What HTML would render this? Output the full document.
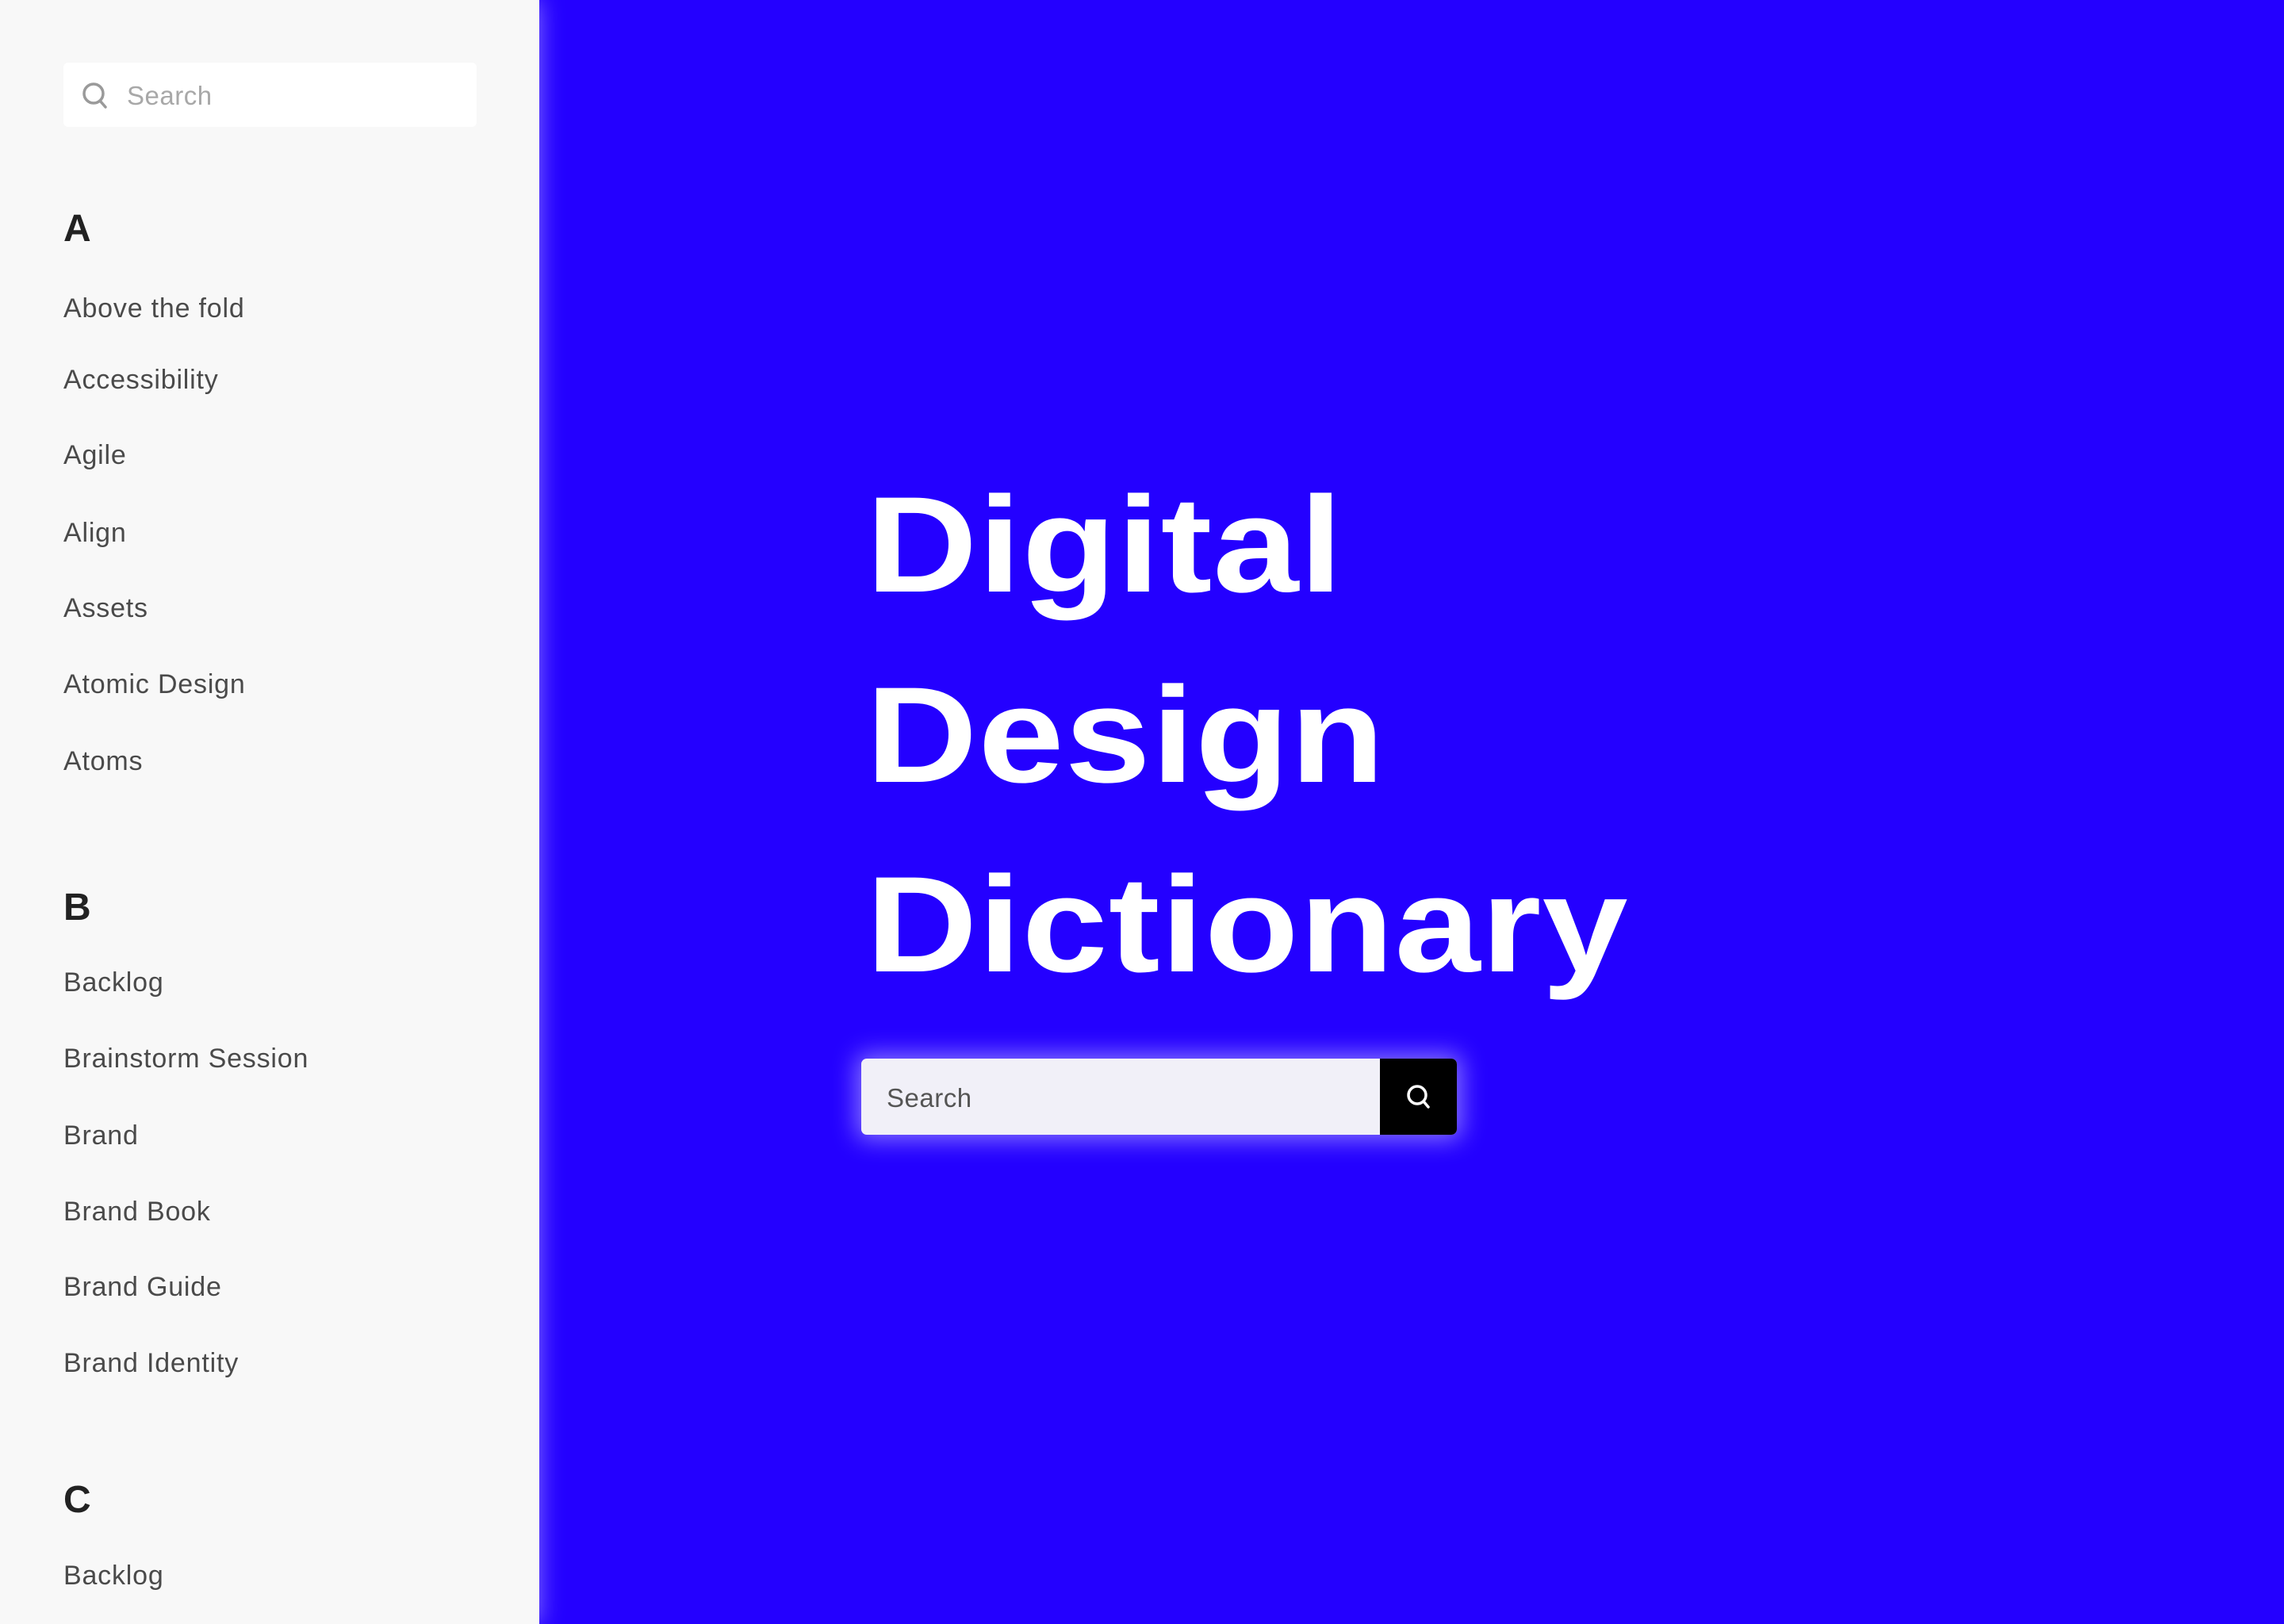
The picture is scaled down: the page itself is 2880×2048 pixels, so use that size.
<!DOCTYPE html>
<html><head><meta charset="utf-8"><style>
*{margin:0;padding:0;box-sizing:border-box}
body{width:2880px;height:2048px;overflow:hidden;background:#2400ff;font-family:"Liberation Sans",sans-serif;position:relative}
.side{position:absolute;left:0;top:0;width:680px;height:2048px;background:#f8f8f8;box-shadow:0 0 28px rgba(255,255,255,0.45)}
.ss{position:absolute;left:80px;top:79px;width:521px;height:81px;background:#fff;border-radius:6px}
.ss span{position:absolute;left:80px;top:23px;font-size:33px;color:#a8a8a8;letter-spacing:0.5px}
.ss svg{position:absolute;left:20px;top:20px}
.h{position:absolute;left:80px;font-size:48px;font-weight:bold;color:#222;line-height:1}
.i{position:absolute;left:80px;font-size:34px;color:#4a4a4a;line-height:1;letter-spacing:0.8px}
.t{position:absolute;left:1092px;font-size:172px;font-weight:bold;color:#fff;line-height:1;letter-spacing:1px;transform:scaleX(1.13);transform-origin:0 0;white-space:nowrap}
.sb{position:absolute;left:1086px;top:1335px;width:751px;height:96px;background:#f1f0f8;border-radius:7px;box-shadow:0 0 30px 6px rgba(255,255,255,0.45);overflow:hidden}
.sb span{position:absolute;left:32px;top:31px;font-size:33px;color:#555;letter-spacing:0.5px}
.sb .b{position:absolute;right:0;top:0;width:97px;height:96px;background:#000}
.sb svg{position:absolute;left:30px;top:29px}
</style></head><body>
<div class="side">
<div class="ss"><svg width="40" height="42" viewBox="0 0 40 42"><circle cx="18" cy="19" r="12" fill="none" stroke="#9a9a9a" stroke-width="3.5"/><path d="M26 28 L33 36" stroke="#9a9a9a" stroke-width="3.5" stroke-linecap="round"/></svg><span>Search</span></div>
<div class="h" style="top:265px">A</div>
<div class="i" style="top:372px">Above the fold</div>
<div class="i" style="top:462px">Accessibility</div>
<div class="i" style="top:557px">Agile</div>
<div class="i" style="top:655px">Align</div>
<div class="i" style="top:750px">Assets</div>
<div class="i" style="top:846px">Atomic Design</div>
<div class="i" style="top:943px">Atoms</div>
<div class="h" style="top:1121px">B</div>
<div class="i" style="top:1222px">Backlog</div>
<div class="i" style="top:1318px">Brainstorm Session</div>
<div class="i" style="top:1415px">Brand</div>
<div class="i" style="top:1511px">Brand Book</div>
<div class="i" style="top:1606px">Brand Guide</div>
<div class="i" style="top:1702px">Brand Identity</div>
<div class="h" style="top:1868px">C</div>
<div class="i" style="top:1970px">Backlog</div>
</div>
<div class="t" style="top:601px">Digital</div>
<div class="t" style="top:841px">Design</div>
<div class="t" style="top:1080px">Dictionary</div>
<div class="sb"><span>Search</span><div class="b"><svg width="40" height="40" viewBox="0 0 40 40"><circle cx="17" cy="17" r="11" fill="none" stroke="#fff" stroke-width="3.5"/><path d="M25 25 L31 32" stroke="#fff" stroke-width="3.5" stroke-linecap="round"/></svg></div></div>
</body></html>
